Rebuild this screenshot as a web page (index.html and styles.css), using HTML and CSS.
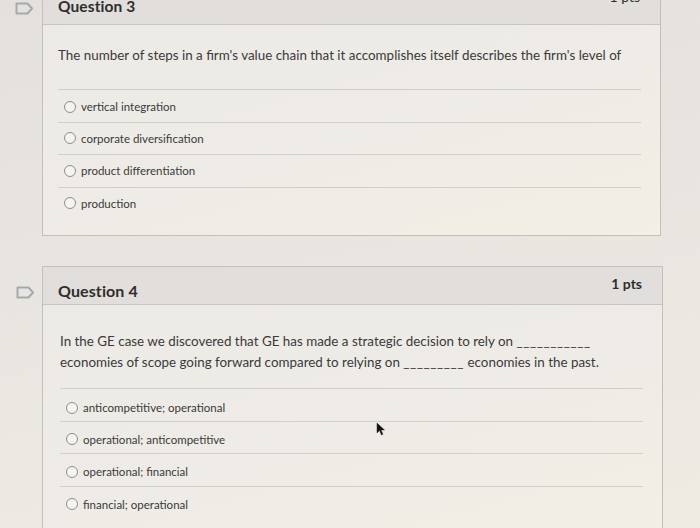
FILE: index.html
```html
<!DOCTYPE html>
<html>
<head>
<meta charset="utf-8">
<link rel="stylesheet" href="styles.css">
</head>
<body>
<div class="page">
  <section class="question q3">
    <div class="gutter">
      <svg class="flag" width="19" height="13" viewBox="0 0 19 13"><path d="M1.5 1.5 H12.5 L17 6.5 L12.5 11.5 H1.5 Z" fill="none" stroke="#a4a9b0" stroke-width="2" stroke-linejoin="round"/></svg>
    </div>
    <div class="card">
      <header class="card-head">
        <h2 class="title">Question 3</h2>
        <span class="pts">1 pts</span>
      </header>
      <div class="card-body">
        <p class="qtext">The number of steps in a firm's value chain that it accomplishes itself describes the firm's level of</p>
        <ul class="answers">
          <li class="answer"><span class="radio"></span>vertical integration</li>
          <li class="answer"><span class="radio"></span>corporate diversification</li>
          <li class="answer"><span class="radio"></span>product differentiation</li>
          <li class="answer"><span class="radio"></span>production</li>
        </ul>
      </div>
    </div>
  </section>

  <section class="question q4">
    <div class="gutter">
      <svg class="flag" width="19" height="13" viewBox="0 0 19 13"><path d="M1.5 1.5 H12.5 L17 6.5 L12.5 11.5 H1.5 Z" fill="none" stroke="#a4a9b0" stroke-width="2" stroke-linejoin="round"/></svg>
    </div>
    <div class="card">
      <header class="card-head">
        <h2 class="title">Question 4</h2>
        <span class="pts">1 pts</span>
      </header>
      <div class="card-body">
        <p class="qtext">In the GE case we discovered that GE has made a strategic decision to rely on <span class="blank">___________</span><br>economies of scope going forward compared to relying on <span class="blank">_________</span> economies in the past.</p>
        <ul class="answers">
          <li class="answer"><span class="radio"></span>anticompetitive; operational</li>
          <li class="answer"><span class="radio"></span>operational; anticompetitive</li>
          <li class="answer"><span class="radio"></span>operational; financial</li>
          <li class="answer"><span class="radio"></span>financial; operational</li>
        </ul>
      </div>
    </div>
  </section>

  <svg class="cursor" width="10" height="14" viewBox="0 0 10 14"><path d="M1 1 L1 11 L3.5 8.5 L5.5 13 L7 12.3 L5 8 L8.5 8 Z" fill="#111" stroke="#333" stroke-width="0.5"/></svg>
</div>
</body>
</html>
```

FILE: styles.css
```css
* { box-sizing: border-box; }
html, body {
  margin: 0;
  padding: 0;
}
body {
  width: 700px;
  height: 528px;
  overflow: hidden;
  background: linear-gradient(170deg, #e4e1dd 0%, #e9e6e1 50%, #efebe3 100%);
  font-family: Lato, "Open Sans", sans-serif;
  color: #3a3a3a;
}
.page {
  position: relative;
  width: 700px;
  height: 528px;
}
.question {
  display: flex;
  width: 661px;
}
.gutter {
  width: 42px;
  flex: none;
  display: flex;
  justify-content: flex-start;
  padding-left: 15px;
}
.q3 { margin-top: -14px; }
.q3 .gutter { padding-top: 16px; }
.q4 { margin-top: 30px; width: 663px; }
.q4 .gutter { padding-top: 20px; padding-left: 16px; }
.card {
  flex: 1;
  border: 1px solid #c3c0bb;
  background: linear-gradient(165deg, #eceae6 0%, #efece7 60%, #f3efe5 100%);
}
.card-head {
  height: 38px;
  background: #e1dedb;
  border-bottom: 1px solid #c9c6c1;
  display: flex;
  align-items: center;
  justify-content: space-between;
  padding: 0 20px 0 15px;
}
.title {
  margin: 0;
  font-size: 15.5px;
  font-weight: 700;
  color: #2e2e2e;
  letter-spacing: 0.1px;
}
.q4 .title { font-size: 16px; margin-top: 10px; }
.pts {
  font-size: 14px;
  font-weight: 700;
  color: #2e2e2e;
}
.q3 .pts { margin-top: -18px; font-weight: 400; }
.q4 .pts { margin-top: -4px; }
.card-body {
  padding: 20px 19px 16px 15px;
}
.q4 .card-body { padding-top: 26px; padding-left: 17px; }
.qtext {
  margin: 0 0 23px 0;
  font-size: 13.4px;
  line-height: 21px;
  color: #3a3a3a;
}
.q4 .qtext { margin-bottom: 15px; }
.blank { letter-spacing: 0.6px; }
.answers {
  list-style: none;
  margin: 0;
  padding: 0;
}
.answer {
  height: 32.5px;
  border-top: 1px solid #d2cfca;
  display: flex;
  align-items: center;
  padding-left: 6px;
  font-size: 11.5px;
  color: #3a3a3a;
}
.answer:first-child { padding-top: 2px; }
.q4 .answer { padding-top: 4px; }
.q4 .answer:first-child { padding-top: 6px; }
.radio {
  width: 12px;
  height: 12px;
  border: 1px solid #8d8d8d;
  border-radius: 50%;
  background: #f6f4f1;
  margin-right: 5px;
  flex: none;
}
.cursor {
  position: absolute;
  left: 376px;
  top: 436px;
}
```
